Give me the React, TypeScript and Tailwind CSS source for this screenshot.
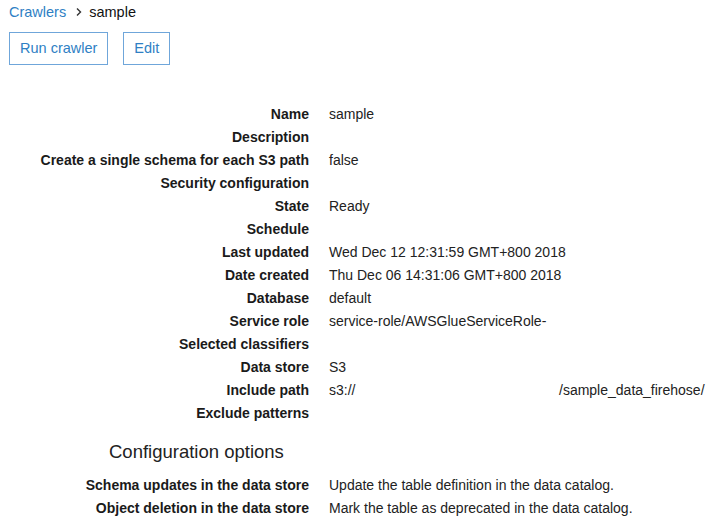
const details: [string, string][] = [
  ['Name', 'sample'],
  ['Description', ''],
  ['Create a single schema for each S3 path', 'false'],
  ['Security configuration', ''],
  ['State', 'Ready'],
  ['Schedule', ''],
  ['Last updated', 'Wed Dec 12 12:31:59 GMT+800 2018'],
  ['Date created', 'Thu Dec 06 14:31:06 GMT+800 2018'],
  ['Database', 'default'],
  ['Service role', 'service-role/AWSGlueServiceRole-'],
  ['Selected classifiers', ''],
  ['Data store', 'S3'],
  ['Include path', ''],
  ['Exclude patterns', ''],
];

const config: [string, string][] = [
  ['Schema updates in the data store', 'Update the table definition in the data catalog.'],
  ['Object deletion in the data store', 'Mark the table as deprecated in the data catalog.'],
];

function Rows({ rows }: { rows: [string, string][] }) {
  return (
    <div className="grid grid-cols-[309px_1fr] gap-x-5 text-[14px]">
      {rows.map(([label, value]) => (
        <div key={label} className="contents">
          <div className="h-[23px] leading-[23px] text-right font-bold text-[#1a1a1a] whitespace-nowrap">{label}</div>
          <div className="h-[23px] leading-[23px] text-[#222] whitespace-nowrap">
            {label === 'Include path' ? (
              <span className="flex">
                <span className="w-[230px]">s3://</span>
                <span>/sample_data_firehose/</span>
              </span>
            ) : (
              value
            )}
          </div>
        </div>
      ))}
    </div>
  );
}

export default function App() {
  return (
    <div className="w-[720px] h-[530px] bg-white overflow-hidden" style={{ fontFamily: '"Liberation Sans", Arial, sans-serif' }}>
      <div className="pl-[9px] pt-[2px] flex items-center h-[20px] text-[14.5px] leading-[20px] box-content">
        <span className="text-[#2f7fc4]">Crawlers</span>
        <svg width="8" height="10" viewBox="0 0 8 10" className="ml-[9px] mr-[6px]">
          <path d="M2 1.5 L5.5 5 L2 8.5" fill="none" stroke="#333" strokeWidth="1.4" />
        </svg>
        <span className="text-[#111]">sample</span>
      </div>

      <div className="flex gap-[15px] pl-[9px] mt-[10px]">
        <button className="h-[33px] px-[10px] border border-[#6fa6da] text-[#2f7fc4] text-[14.5px] bg-white">Run crawler</button>
        <button className="h-[33px] px-[10px] border border-[#6fa6da] text-[#2f7fc4] text-[14.5px] bg-white">Edit</button>
      </div>

      <div className="mt-[38px]">
        <Rows rows={details} />
      </div>

      <h2 className="pl-[109px] mt-[15px] text-[18.5px] leading-[24px] text-[#222]">Configuration options</h2>

      <div className="mt-[10px]">
        <Rows rows={config} />
      </div>
    </div>
  );
}
